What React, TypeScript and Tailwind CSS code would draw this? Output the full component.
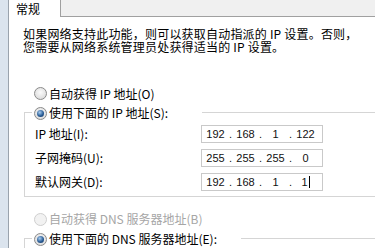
import React from "react";

const cjk = { fontFamily: '"Noto Sans CJK SC", "Noto Sans", sans-serif' };

function Radio({ checked, disabled }: { checked?: boolean; disabled?: boolean }) {
  return (
    <span
      className={
        "flex w-[13px] h-[13px] shrink-0 items-center justify-center rounded-full border " +
        (disabled
          ? "border-[#cfcfcf] bg-[#f2f2f2]"
          : "border-[#8a8a8a] bg-[radial-gradient(circle_at_50%_40%,#fbfbfb,#d4d4d4)]")
      }
    >
      {checked && (
        <span className="block w-[7px] h-[7px] rounded-full bg-[radial-gradient(circle_at_40%_35%,#a9cdf0,#2b5e97_55%,#0c2c55)]" />
      )}
    </span>
  );
}

function IpBox({ parts, caret }: { parts: string[]; caret?: boolean }) {
  return (
    <div className="flex h-[18px] w-[122px] items-center border border-[#c9c9c9] bg-white text-[11px] text-[#111]" style={{ fontFamily: '"Liberation Sans", Arial, sans-serif' }}>
      {parts.map((p, i) => (
        <React.Fragment key={i}>
          {i > 0 && <span className="w-[3px] text-center">.</span>}
          <span className="flex w-[27px] justify-center">
            {p}
            {caret && i === 3 && <span className="ml-px inline-block h-[12px] w-px bg-black" />}
          </span>
        </React.Fragment>
      ))}
    </div>
  );
}

function Row({ label, parts, caret }: { label: string; parts: string[]; caret?: boolean }) {
  return (
    <div className="flex h-[18px] items-center">
      <span className="w-[176px] pl-[10px]">{label}</span>
      <IpBox parts={parts} caret={caret} />
    </div>
  );
}

export default function App() {
  return (
    <div className="flex h-[248px] w-[375px] overflow-hidden bg-white text-[12px] leading-[12px] text-black" style={cjk}>
      {/* window frame */}
      <div className="w-[9px] shrink-0 border-r border-[#9aa3ad] bg-[#dbe4ee]" />

      <div className="flex min-w-0 flex-1 flex-col">
        {/* tab strip */}
        <div className="flex h-[17px] shrink-0">
          <div className="w-[52px] border-r border-[#a0a0a0] pl-[7px] pt-[2px] leading-[13px]">常规</div>
          <div className="flex-1 border-b border-[#a0a0a0] bg-[#f0f0f0]" />
        </div>

        {/* description */}
        <div className="mt-[10px] whitespace-nowrap pl-[14px] leading-[13px] tracking-[0.2px]">
          <p>如果网络支持此功能，则可以获取自动指派的 IP 设置。否则，</p>
          <p>您需要从网络系统管理员处获得适当的 IP 设置。</p>
        </div>

        {/* IP section */}
        <div className="mt-[31px] flex h-[19px] items-center gap-[2px] pl-[25px]">
          <Radio />
          <span>自动获得 IP 地址(O)</span>
        </div>

        <div className="ml-[15px] mt-[9px] border-b border-l border-t border-[#d5d5d5] pb-[5px]">
          <div className="-mt-[9px] ml-[7px] flex h-[18px] w-fit items-center gap-[2px] bg-white pl-[2px] pr-[34px]">
            <Radio checked />
            <span>使用下面的 IP 地址(S):</span>
          </div>
          <div className="mt-[3px] flex flex-col gap-[6px] whitespace-nowrap">
            <Row label="IP 地址(I):" parts={["192", "168", "1", "122"]} />
            <Row label="子网掩码(U):" parts={["255", "255", "255", "0"]} />
            <Row label="默认网关(D):" parts={["192", "168", "1", "1"]} caret />
          </div>
        </div>

        {/* DNS section */}
        <div className="mt-[13px] flex h-[18px] items-center gap-[2px] whitespace-nowrap pl-[25px] text-[#a6a6a6]">
          <Radio disabled />
          <span>自动获得 DNS 服务器地址(B)</span>
        </div>

        <div className="ml-[15px] mt-[10px] flex-1 border-l border-t border-[#d5d5d5]">
          <div className="-mt-[9px] ml-[7px] flex h-[18px] w-fit items-center gap-[2px] whitespace-nowrap bg-white pl-[2px] pr-[24px]">
            <Radio checked />
            <span>使用下面的 DNS 服务器地址(E):</span>
          </div>
        </div>
      </div>
    </div>
  );
}
